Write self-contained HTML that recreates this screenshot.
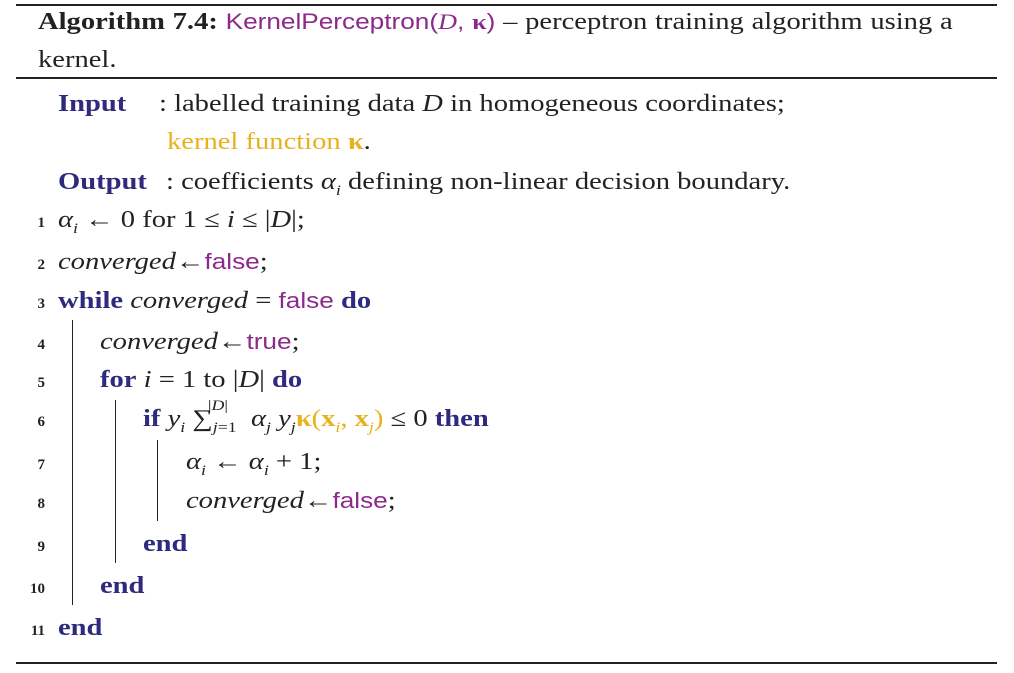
<!DOCTYPE html><html><head><meta charset="utf-8"><style>
body{margin:0;width:1014px;height:673px;background:#fff;position:relative;overflow:hidden;font-family:"Liberation Serif",serif;font-size:24px;color:#222}
.l{position:absolute;white-space:nowrap;line-height:24px;transform:scaleX(1.19);transform-origin:0 50%}
.r{position:absolute;left:16px;width:981px;background:#222}
.n{position:absolute;font-weight:bold;font-size:15px;line-height:15px;width:30px;text-align:right;left:15px}
.v{position:absolute;width:1.3px;background:#222}
b.k{color:#2e2a7e}
.p{color:#8b2a8b;font-family:"Liberation Sans",sans-serif;font-size:22px}
.y{color:#e8b21e}
i{font-style:italic}
sub,sup{font-size:15px}
</style></head><body>
<div class="r" style="top:4px;height:2px"></div>
<div class="r" style="top:77px;height:2px"></div>
<div class="r" style="top:662px;height:2px"></div>
<div class="l" style="left:38px;top:10px;word-spacing:0.5px"><b>Algorithm 7.4:</b> <span class="p">KernelPerceptron(<i style="font-family:'Liberation Serif'">D</i>, <b style="font-family:'Liberation Serif'">κ</b>)</span> – perceptron training algorithm using a</div>
<div class="l" style="left:38px;top:48px">kernel.</div>
<div class="l" style="left:58px;top:92px"><b class="k">Input</b></div>
<div class="l" style="left:159px;top:92px">: labelled training data <i>D</i> in homogeneous coordinates;</div>
<div class="l y" style="left:167px;top:130px">kernel function <b>κ</b><span style="color:#222">.</span></div>
<div class="l" style="left:58px;top:170px"><b class="k">Output</b></div>
<div class="l" style="left:166px;top:170px">: coefficients <i>α<sub>i</sub></i> defining non-linear decision boundary.</div>
<div class="n" style="top:216px">1</div><div class="l" style="left:58px;top:208px"><i>α<sub>i</sub></i> ← 0 for 1 ≤ <i>i</i> ≤ |<i>D</i>|;</div>
<div class="n" style="top:258px">2</div><div class="l" style="left:58px;top:250px"><i>converged</i>←<span class="p">false</span>;</div>
<div class="n" style="top:297px">3</div><div class="l" style="left:58px;top:289px"><b class="k">while</b> <i>converged</i> = <span class="p">false</span> <b class="k">do</b></div>
<div class="n" style="top:338px">4</div><div class="l" style="left:100px;top:330px"><i>converged</i>←<span class="p">true</span>;</div>
<div class="n" style="top:376px">5</div><div class="l" style="left:100px;top:368px"><b class="k">for</b> <i>i</i> = 1 to |<i>D</i>| <b class="k">do</b></div>
<div class="n" style="top:415px">6</div><div class="l" style="left:143px;top:407px"><b class="k">if</b> <i>y<sub>i</sub></i> <span style="position:relative">∑<sup style="position:absolute;left:13px;top:-12px">|<i>D</i>|</sup><sub><i>j</i>=1</sub></span> &nbsp;<i>α<sub>j</sub></i> <i>y<sub>j</sub></i><span class="y"><b>κ</b>(<b>x</b><sub><i>i</i></sub>, <b>x</b><sub><i>j</i></sub>)</span> ≤ 0 <b class="k">then</b></div>
<div class="n" style="top:458px">7</div><div class="l" style="left:186px;top:450px"><i>α<sub>i</sub></i> ← <i>α<sub>i</sub></i> + 1;</div>
<div class="n" style="top:497px">8</div><div class="l" style="left:186px;top:489px"><i>converged</i>←<span class="p">false</span>;</div>
<div class="n" style="top:540px">9</div><div class="l" style="left:143px;top:532px"><b class="k">end</b></div>
<div class="n" style="top:582px">10</div><div class="l" style="left:100px;top:574px"><b class="k">end</b></div>
<div class="n" style="top:624px">11</div><div class="l" style="left:58px;top:616px"><b class="k">end</b></div>
<div class="v" style="left:72px;top:320px;height:285px"></div>
<div class="v" style="left:115px;top:400px;height:163px"></div>
<div class="v" style="left:157px;top:440px;height:81px"></div>
</body></html>
